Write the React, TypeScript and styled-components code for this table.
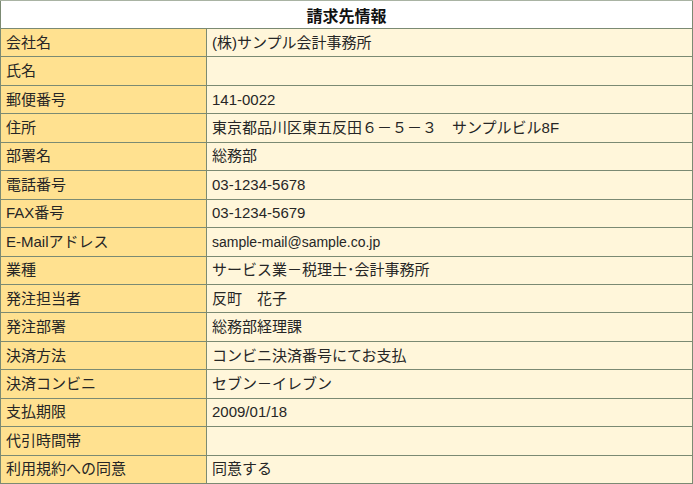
import styled, { createGlobalStyle } from "styled-components";

const GlobalStyle = createGlobalStyle`
  html, body {
    margin: 0;
    padding: 0;
    background: #ffffff;
  }
`;

const Table = styled.table`
  width: 693px;
  border-collapse: collapse;
  font-family: "Liberation Sans", "Noto Sans CJK JP", sans-serif;
  color: #262626;
  border: 1px solid #7b8a73;
`;

const HeaderCell = styled.th`
  height: 27px;
  padding: 0;
  background: #ffffff;
  border-top: 1px solid #a9b3a3;
  border-bottom: 1px solid #7b8a73;
  font-size: 16px;
  font-weight: bold;
  color: #111;
  text-align: center;
  vertical-align: middle;
`;

const Row = styled.tr`
  height: 28.4375px;
`;

const Label = styled.td`
  width: 200px;
  padding: 0 0 0 5px;
  background: #ffe190;
  border: 1px solid #7b8a73;
  font-size: 15px;
  line-height: 18px;
  vertical-align: middle;
  white-space: nowrap;
`;

const Value = styled.td<{ $small?: boolean }>`
  padding: 0 0 0 5px;
  background: #fff6da;
  border: 1px solid #7b8a73;
  font-size: ${(p) => (p.$small ? "14px" : "15px")};
  line-height: 18px;
  vertical-align: middle;
  white-space: nowrap;
`;

const rows: { label: string; value: string; small?: boolean }[] = [
  { label: "会社名", value: "(株)サンプル会計事務所" },
  { label: "氏名", value: "" },
  { label: "郵便番号", value: "141-0022" },
  { label: "住所", value: "東京都品川区東五反田６－５－３　サンプルビル8F" },
  { label: "部署名", value: "総務部" },
  { label: "電話番号", value: "03-1234-5678" },
  { label: "FAX番号", value: "03-1234-5679" },
  { label: "E-Mailアドレス", value: "sample-mail@sample.co.jp", small: true },
  { label: "業種", value: "サービス業－税理士･会計事務所" },
  { label: "発注担当者", value: "反町　花子" },
  { label: "発注部署", value: "総務部経理課" },
  { label: "決済方法", value: "コンビニ決済番号にてお支払" },
  { label: "決済コンビニ", value: "セブン－イレブン" },
  { label: "支払期限", value: "2009/01/18" },
  { label: "代引時間帯", value: "" },
  { label: "利用規約への同意", value: "同意する" },
];

function App() {
  return (
    <>
      <GlobalStyle />
      <Table>
        <thead>
          <tr>
            <HeaderCell colSpan={2}>請求先情報</HeaderCell>
          </tr>
        </thead>
        <tbody>
          {rows.map((row) => (
            <Row key={row.label}>
              <Label>{row.label}</Label>
              <Value $small={row.small}>{row.value}</Value>
            </Row>
          ))}
        </tbody>
      </Table>
    </>
  );
}

export default App;
